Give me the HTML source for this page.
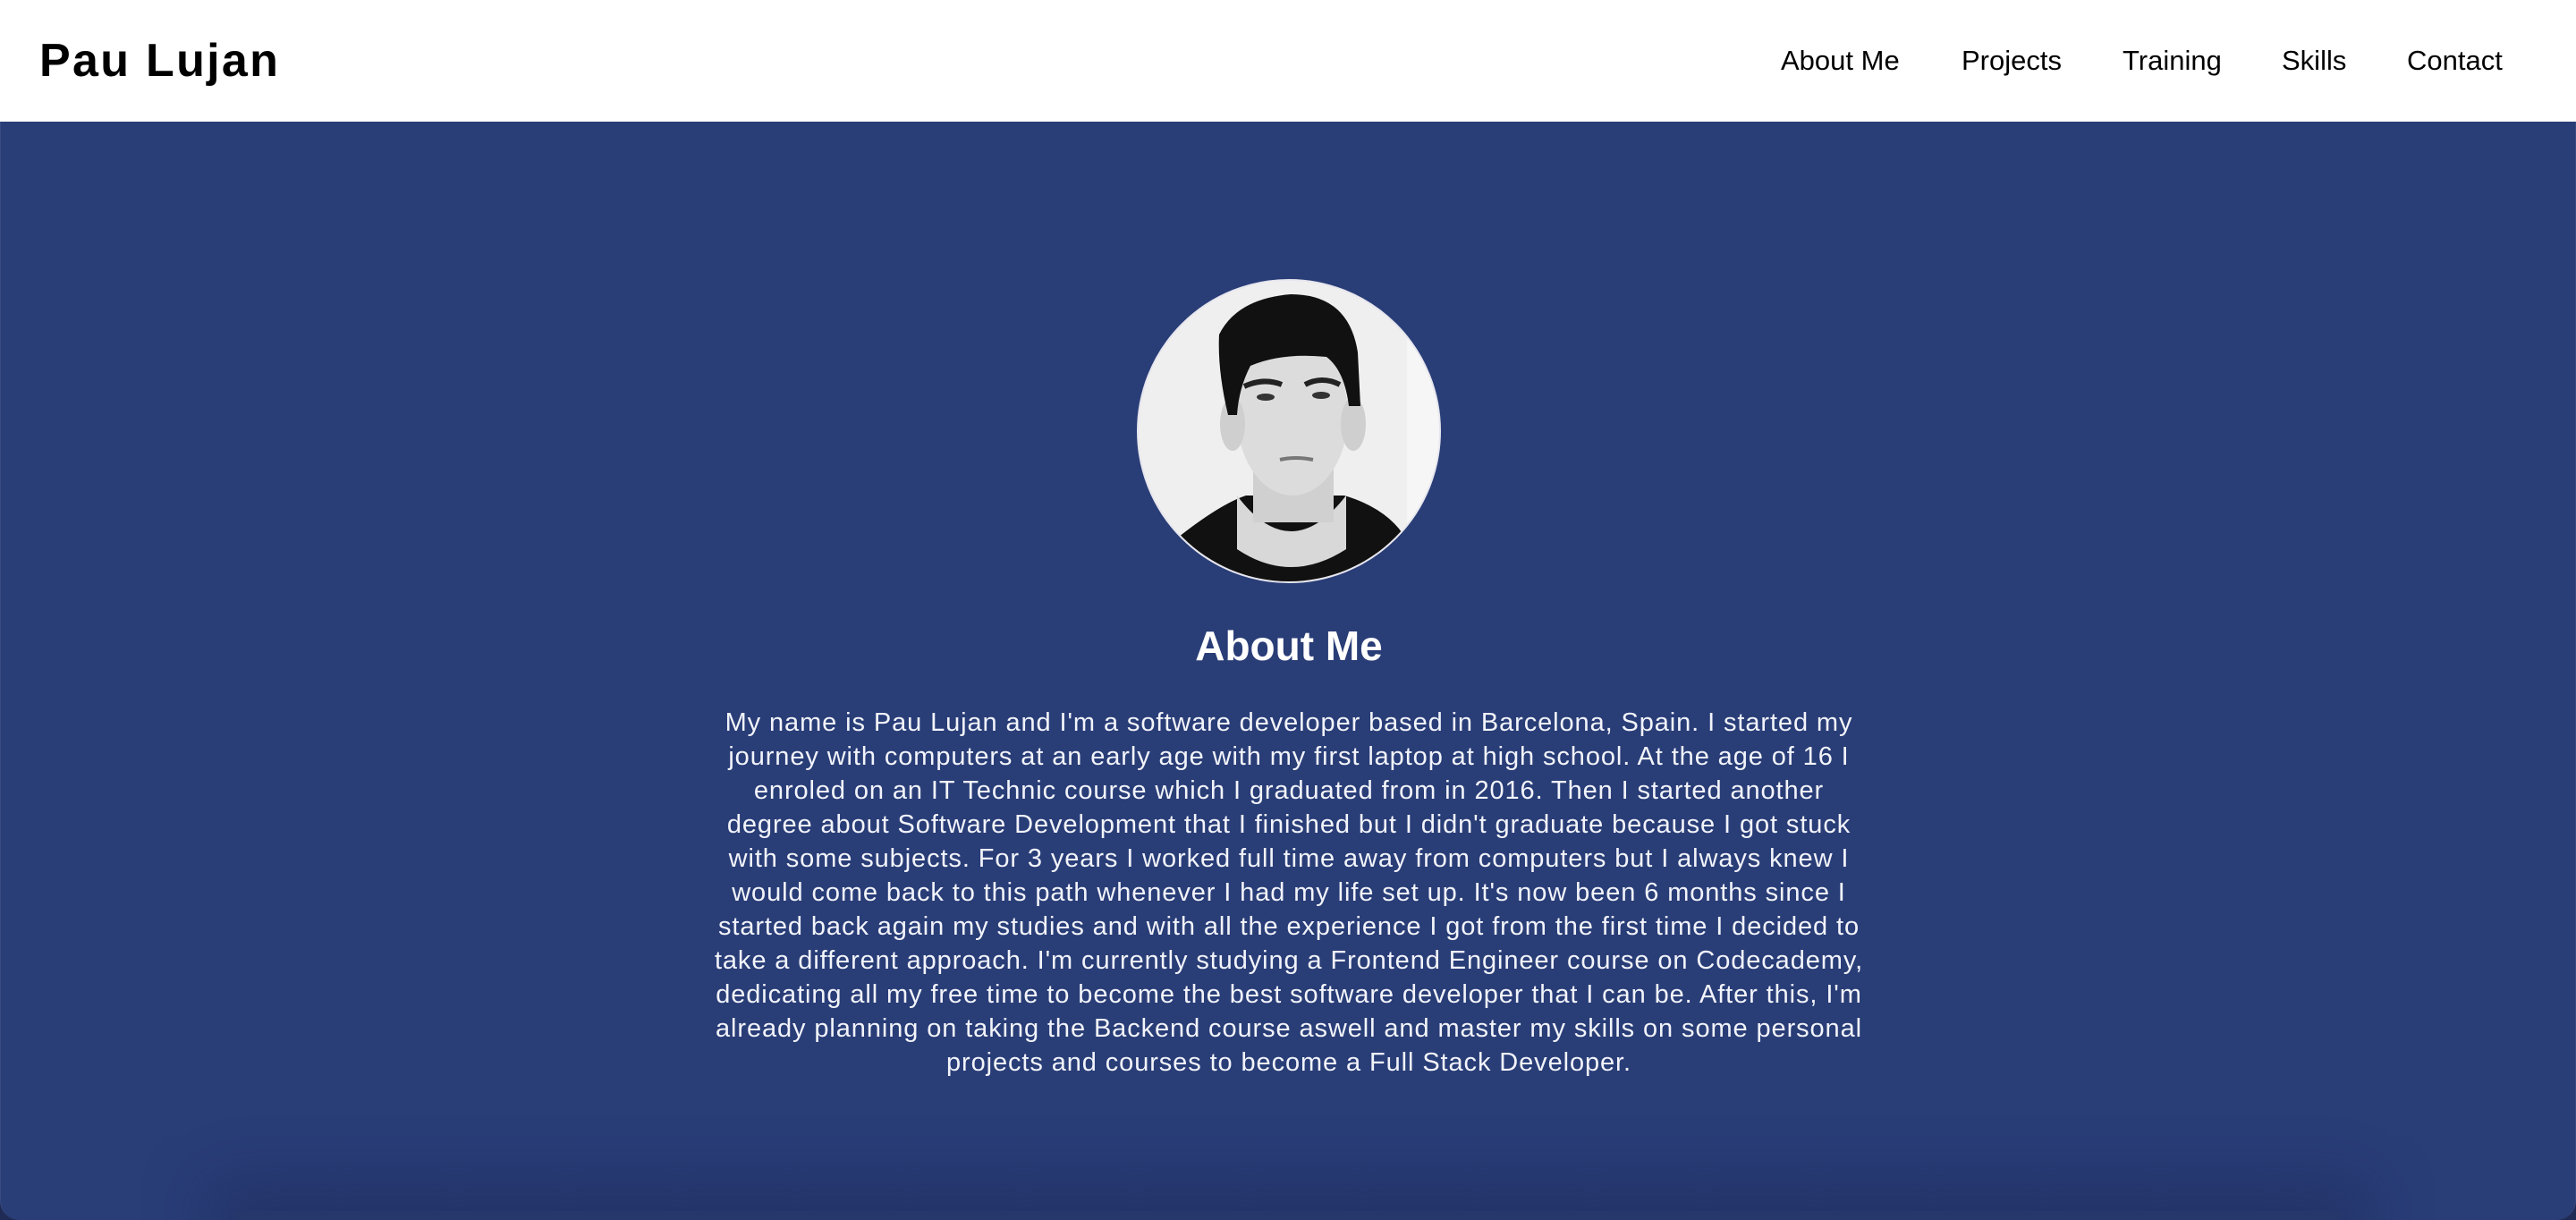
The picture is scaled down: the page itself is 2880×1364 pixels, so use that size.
<!DOCTYPE html>
<html><head><meta charset="utf-8"><style>
html,body{margin:0;padding:0;width:2880px;height:1364px;overflow:hidden;background:#1f2b55;font-family:"Liberation Sans",Arial,sans-serif}
header{position:absolute;left:0;top:0;width:2880px;height:136px;background:#fff}
.logo{position:absolute;left:44px;top:38px;font-size:52px;font-weight:bold;letter-spacing:2.3px;color:#000;line-height:60px}
nav span{position:absolute;top:48px;font-size:31px;color:#000;line-height:40px}
main{position:absolute;left:0;top:136px;width:2880px;height:1228px;background:#293d77;border-radius:0 0 22px 22px;overflow:hidden;border-left:1px solid #3a4a80;border-right:1px solid #3a4a80;box-sizing:border-box}
.shadow{position:absolute;left:260px;right:260px;bottom:0;height:10px;box-shadow:0 0 70px 25px rgba(25,35,80,.5);background:#26376c;border-radius:10px}
.photo{position:absolute;left:1270px;top:176px;width:340px;height:340px;border-radius:50%;overflow:hidden;border:2px solid #e6e6ee;box-sizing:border-box;background:#efefef}
h2{position:absolute;left:0;width:2880px;top:556px;margin:0;text-align:center;color:#fff;font-size:46px;font-weight:bold;line-height:60px}
.p{position:absolute;left:0;width:2880px;top:653px;text-align:center;color:#f2f4fa;font-size:29px;line-height:38px;letter-spacing:0.9px}
.p div{white-space:nowrap}
</style></head><body>
<header>
<div class="logo">Pau Lujan</div>
<nav>
<span style="left:1991px">About Me</span>
<span style="left:2193px">Projects</span>
<span style="left:2373px">Training</span>
<span style="left:2551px">Skills</span>
<span style="left:2691px">Contact</span>
</nav>
</header>
<main>
<div class="shadow"></div>
<div class="photo">
<svg width="340" height="340" viewBox="0 0 340 340">
<rect width="340" height="340" fill="#efefef"/>
<rect x="300" y="0" width="40" height="340" fill="#f6f6f6"/>
<path d="M40 290 Q90 250 120 240 L230 240 Q280 255 300 290 L300 340 L40 340Z" fill="#111"/>
<path d="M110 240 Q170 320 232 240 L232 300 Q170 340 110 300Z" fill="#d8d8d8"/>
<rect x="128" y="190" width="90" height="80" fill="#d0d0d0"/>
<ellipse cx="172" cy="150" rx="62" ry="90" fill="#dcdcdc"/>
<ellipse cx="105" cy="160" rx="14" ry="30" fill="#cfcfcf"/>
<ellipse cx="240" cy="160" rx="14" ry="30" fill="#cfcfcf"/>
<path d="M90 60 Q110 20 170 15 Q235 15 245 80 L248 140 L235 140 Q230 100 210 85 Q160 80 125 95 Q112 120 110 150 L100 150 Q88 100 90 60Z" fill="#111"/>
<path d="M118 118 Q140 108 160 116" stroke="#222" stroke-width="6" fill="none"/>
<path d="M186 116 Q205 106 225 116" stroke="#222" stroke-width="6" fill="none"/>
<ellipse cx="142" cy="130" rx="10" ry="4" fill="#333"/>
<ellipse cx="204" cy="128" rx="10" ry="4" fill="#333"/>
<path d="M158 200 Q175 196 195 200" stroke="#777" stroke-width="4" fill="none"/>
</svg>
</div>
<h2>About Me</h2>
<div class="p">
<div>My name is Pau Lujan and I'm a software developer based in Barcelona, Spain. I started my</div>
<div>journey with computers at an early age with my first laptop at high school. At the age of 16 I</div>
<div>enroled on an IT Technic course which I graduated from in 2016. Then I started another</div>
<div>degree about Software Development that I finished but I didn't graduate because I got stuck</div>
<div>with some subjects. For 3 years I worked full time away from computers but I always knew I</div>
<div>would come back to this path whenever I had my life set up. It's now been 6 months since I</div>
<div>started back again my studies and with all the experience I got from the first time I decided to</div>
<div>take a different approach. I'm currently studying a Frontend Engineer course on Codecademy,</div>
<div>dedicating all my free time to become the best software developer that I can be. After this, I'm</div>
<div>already planning on taking the Backend course aswell and master my skills on some personal</div>
<div>projects and courses to become a Full Stack Developer.</div>
</div>
</main>
</body></html>
